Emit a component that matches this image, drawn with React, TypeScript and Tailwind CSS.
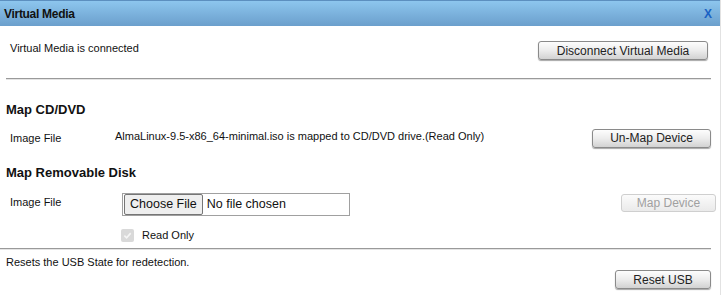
import React from "react";

const btn =
  "h-[19px] rounded-[3px] border border-[#8a8a8a] bg-gradient-to-b from-[#fdfdfd] via-[#ececec] to-[#d2d2d2] text-[12px] leading-none text-[#222] shadow-[0_1px_1px_rgba(0,0,0,0.35)]";

export default function App() {
  return (
    <div
      className="w-[721px] h-[295px] bg-white overflow-hidden relative border-r border-[#e2e2e2]"
      style={{ fontFamily: '"Liberation Sans", Arial, sans-serif' }}
    >
      <div className="h-[26px] border-t border-[#5c8fbf] bg-gradient-to-b from-[#8dc6ee] to-[#6b9fcc] flex items-center justify-between pl-[4px] pr-[8px]">
        <span className="text-[12px] font-bold text-[#111] tracking-[-0.3px]">Virtual Media</span>
        <span className="text-[12px] font-bold text-[#1a62c4]">X</span>
      </div>

      <div className="flex justify-between items-start pl-[10px] pr-[12px] pt-[15px]">
        <span className="text-[11px] text-[#111] mt-[-1px]">Virtual Media is connected</span>
        <button className={`${btn} w-[170px]`}>Disconnect Virtual Media</button>
      </div>

      <div className="mx-[6px] mr-[9px] mt-[18px] h-[2px] border-t border-[#9a9a9a] border-b border-b-[#e4e4e4]" />

      <div className="pl-[6px] pt-[20px] text-[13px] font-bold text-[#111]">Map CD/DVD</div>

      <div className="flex items-center pl-[10px] pr-[9px] mt-[9px]">
        <span className="w-[105px] text-[11px] text-[#111]">Image File</span>
        <span className="flex-1 text-[11px] text-[#111] mt-[-4px]">
          AlmaLinux-9.5-x86_64-minimal.iso is mapped to CD/DVD drive.(Read Only)
        </span>
        <button className={`${btn} w-[119px]`}>Un-Map Device</button>
      </div>

      <div className="pl-[6px] pt-[15px] text-[13px] font-bold text-[#111]">Map Removable Disk</div>

      <div className="flex items-start pl-[10px] pr-[4px] mt-[11px]">
        <span className="w-[112px] text-[11px] text-[#111] mt-[1px]">Image File</span>
        <div className="flex flex-col">
          <div className="w-[228px] h-[23px] border border-[#a0a0a0] flex items-center bg-white">
            <span className="h-[21px] px-[5px] flex items-center bg-[#efefef] text-[12.5px] text-[#111] border border-[#767676] rounded-[2px] ml-[1px]">
              Choose File
            </span>
            <span className="ml-[4px] text-[12.5px] text-[#111]">No file chosen</span>
          </div>
          <label className="flex items-center mt-[11px] ml-[-1px]">
            <span className="w-[13px] h-[13px] rounded-[2px] bg-[#d9d9d9] flex items-center justify-center">
              <svg width="9" height="9" viewBox="0 0 10 10">
                <path d="M1.5 5.2 L4 7.6 L8.6 2.4" stroke="#f5f5f5" strokeWidth="1.8" fill="none" />
              </svg>
            </span>
            <span className="ml-[8px] text-[11px] text-[#111]">Read Only</span>
          </label>
        </div>
        <div className="flex-1" />
        <button
          className="mt-[1px] h-[18px] w-[95px] rounded-[3px] border border-[#cfcfcf] bg-gradient-to-b from-[#fbfbfb] to-[#eaeaea] text-[12px] leading-none text-[#a0a0a0]"
        >
          Map Device
        </button>
      </div>

      <div className="mr-[9px] mt-[4px] h-[2px] border-t border-[#9a9a9a] border-b border-b-[#e4e4e4]" />

      <div className="pl-[6px] pt-[4px] text-[11px] text-[#111]">Resets the USB State for redetection.</div>

      <div className="flex justify-end pr-[9px] mt-[0px]">
        <button className={`${btn} w-[96px]`}>Reset USB</button>
      </div>
    </div>
  );
}
